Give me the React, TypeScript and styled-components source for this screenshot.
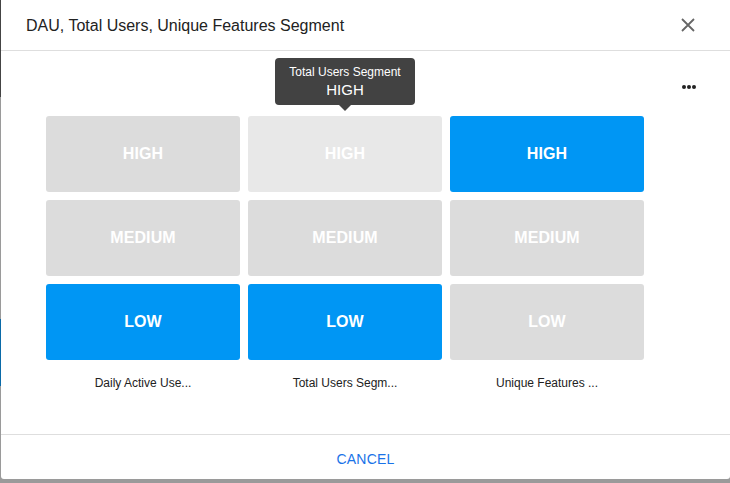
import React from "react";
import styled, { createGlobalStyle } from "styled-components";

const Global = createGlobalStyle`
  html, body { margin: 0; padding: 0; }
  body {
    background: #6f6f6f;
    font-family: "Liberation Sans", Arial, sans-serif;
    width: 730px;
    height: 483px;
    overflow: hidden;
  }
`;

const Backdrop = styled.div`
  width: 730px;
  height: 483px;
  display: flex;
  align-items: flex-start;
  justify-content: flex-end;
  background: linear-gradient(to bottom, #444 0 20%, #9a9a9a 20% 66%, #0a6aa8 66% 80%, #9a9a9a 80% 100%);
`;

const Dialog = styled.div`
  width: 729px;
  height: 479px;
  background: #fff;
  border-radius: 0 0 3px 3px;
  display: flex;
  flex-direction: column;
`;

const Header = styled.div`
  height: 50px;
  flex: none;
  border-bottom: 1px solid #dedede;
  display: flex;
  align-items: center;
  justify-content: space-between;
  padding: 0 34px 0 25px;
`;

const Title = styled.h1`
  margin: 0;
  font-size: 16px;
  font-weight: 400;
  color: #222;
  padding-top: 1px;
`;

const CloseButton = styled.button`
  border: 0;
  background: none;
  padding: 0;
  width: 16px;
  height: 16px;
  display: flex;
  cursor: pointer;
`;

const Body = styled.div`
  flex: 1;
  display: flex;
  padding: 0 0 0 45px;
`;

const Chart = styled.div`
  width: 598px;
  padding-top: 65px;
  display: flex;
  flex-direction: column;
`;

const Grid = styled.div`
  display: grid;
  grid-template-columns: repeat(3, 194px);
  gap: 8px;
`;

const Column = styled.div`
  position: relative;
  display: grid;
  grid-template-rows: repeat(3, 76px);
  gap: 8px;
`;

const Tile = styled.div<{ $state: "off" | "on" | "hover" }>`
  border-radius: 3px;
  background: ${(p) =>
    p.$state === "on" ? "#0096f4" : p.$state === "hover" ? "#e8e8e8" : "#dcdcdc"};
  color: #fff;
  font-weight: 700;
  font-size: 16px;
  display: flex;
  align-items: center;
  justify-content: center;
  letter-spacing: 0.1px;
`;

const Labels = styled.div`
  display: grid;
  grid-template-columns: repeat(3, 194px);
  gap: 8px;
  margin-top: 16px;
`;

const Label = styled.div`
  font-size: 12px;
  color: #222;
  text-align: center;
  line-height: 14px;
`;

const Tooltip = styled.div`
  position: absolute;
  left: 50%;
  bottom: calc(100% + 11px);
  transform: translateX(-50%);
  width: 140px;
  height: 47px;
  box-sizing: border-box;
  background: #424242;
  border-radius: 4px;
  color: #fff;
  display: flex;
  flex-direction: column;
  align-items: center;
  padding-top: 7px;
  &::after {
    content: "";
    position: absolute;
    left: 50%;
    top: 100%;
    transform: translateX(-50%);
    border: 6px solid transparent;
    border-top-color: #424242;
    border-bottom: 0;
  }
`;

const TipTitle = styled.div`
  font-size: 12px;
  line-height: 14px;
`;

const TipValue = styled.div`
  font-size: 15px;
  line-height: 18px;
  margin-top: 2px;
`;

const More = styled.div`
  flex: 1;
  display: flex;
  justify-content: center;
  padding-top: 33px;
  padding-left: 4px;
`;

const Footer = styled.div`
  height: 44px;
  flex: none;
  border-top: 1px solid #dedede;
  display: flex;
  align-items: center;
  justify-content: center;
`;

const CancelButton = styled.button`
  border: 0;
  background: none;
  font-family: inherit;
  font-size: 14px;
  color: #1a73e8;
  letter-spacing: 0.2px;
  padding: 3px 0 0;
  cursor: pointer;
`;

type Col = { label: string; on: string; hover?: string };

const columns: Col[] = [
  { label: "Daily Active Use...", on: "LOW" },
  { label: "Total Users Segm...", on: "LOW", hover: "HIGH" },
  { label: "Unique Features ...", on: "HIGH" },
];

const levels = ["HIGH", "MEDIUM", "LOW"];

export default function App() {
  return (
    <>
      <Global />
      <Backdrop>
        <Dialog>
          <Header>
            <Title>DAU, Total Users, Unique Features Segment</Title>
            <CloseButton aria-label="close">
              <svg width="16" height="16" viewBox="0 0 16 16">
                <path d="M2 2 L14 14 M14 2 L2 14" stroke="#666" strokeWidth="1.8" />
              </svg>
            </CloseButton>
          </Header>
          <Body>
            <Chart>
              <Grid>
                {columns.map((c) => (
                  <Column key={c.label}>
                    {c.hover && (
                      <Tooltip>
                        <TipTitle>Total Users Segment</TipTitle>
                        <TipValue>HIGH</TipValue>
                      </Tooltip>
                    )}
                    {levels.map((l) => (
                      <Tile
                        key={l}
                        $state={l === c.on ? "on" : l === c.hover ? "hover" : "off"}
                      >
                        {l}
                      </Tile>
                    ))}
                  </Column>
                ))}
              </Grid>
              <Labels>
                {columns.map((c) => (
                  <Label key={c.label}>{c.label}</Label>
                ))}
              </Labels>
            </Chart>
            <More>
              <svg width="16" height="6" viewBox="0 0 16 6">
                <circle cx="3" cy="3" r="2" fill="#222" />
                <circle cx="8" cy="3" r="2" fill="#222" />
                <circle cx="13" cy="3" r="2" fill="#222" />
              </svg>
            </More>
          </Body>
          <Footer>
            <CancelButton>CANCEL</CancelButton>
          </Footer>
        </Dialog>
      </Backdrop>
    </>
  );
}
